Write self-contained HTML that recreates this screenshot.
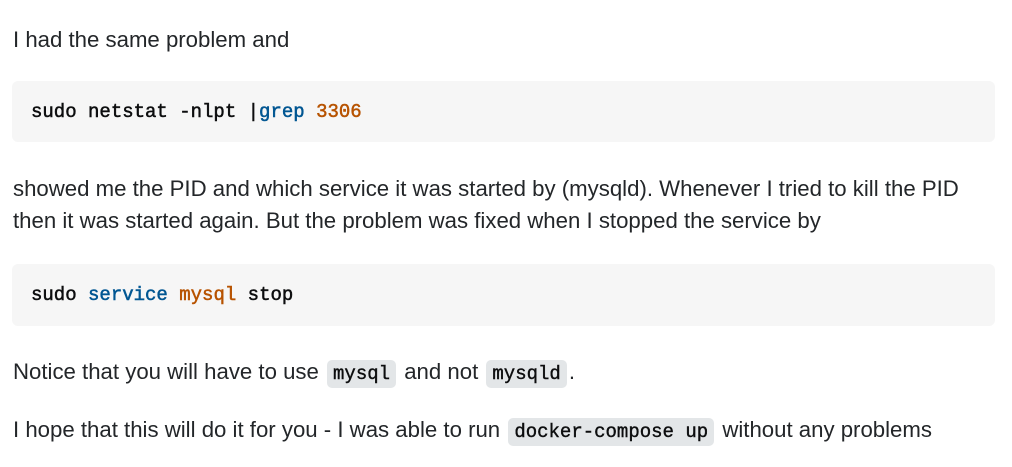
<!DOCTYPE html>
<html><head><meta charset="utf-8"><style>
body{margin:0;width:1012px;height:467px;background:#fff;position:relative;overflow:hidden;font-family:"Liberation Sans",sans-serif;font-size:22.2px;color:#232629}
.t{position:absolute;left:13px;white-space:nowrap;line-height:32px}
.pre{position:absolute;left:12px;width:983px;background:#f6f6f6;border-radius:6px}
.pre span.c{position:absolute;left:19px;top:50%;transform:translateY(-50%);font-family:"Liberation Mono",monospace;font-size:19px;color:#0c0d0e;white-space:pre;-webkit-text-stroke:0.5px currentColor}
.b{color:#015692}.o{color:#b75301}
code{font-family:"Liberation Mono",monospace;font-size:19px;background:#e3e6e8;border-radius:5px;padding:3px 6px;margin:0 2px;color:#0c0d0e;-webkit-text-stroke:0.4px currentColor}
</style></head><body>
<div class="t" style="top:24px">I had the same problem and</div>
<div class="pre" style="top:81px;height:61px"><span class="c">sudo netstat -nlpt |<span class="b">grep</span> <span class="o">3306</span></span></div>
<div class="t" style="top:173px">showed me the PID and which service it was started by (mysqld). Whenever I tried to kill the PID</div>
<div class="t" style="top:205px">then it was started again. But the problem was fixed when I stopped the service by</div>
<div class="pre" style="top:264px;height:62px"><span class="c">sudo <span class="b">service</span> <span class="o">mysql</span> stop</span></div>
<div class="t" style="top:356px">Notice that you will have to use <code>mysql</code> and not <code>mysqld</code>.</div>
<div class="t" style="top:414px">I hope that this will do it for you - I was able to run <code>docker-compose up</code> without any problems</div>
</body></html>
